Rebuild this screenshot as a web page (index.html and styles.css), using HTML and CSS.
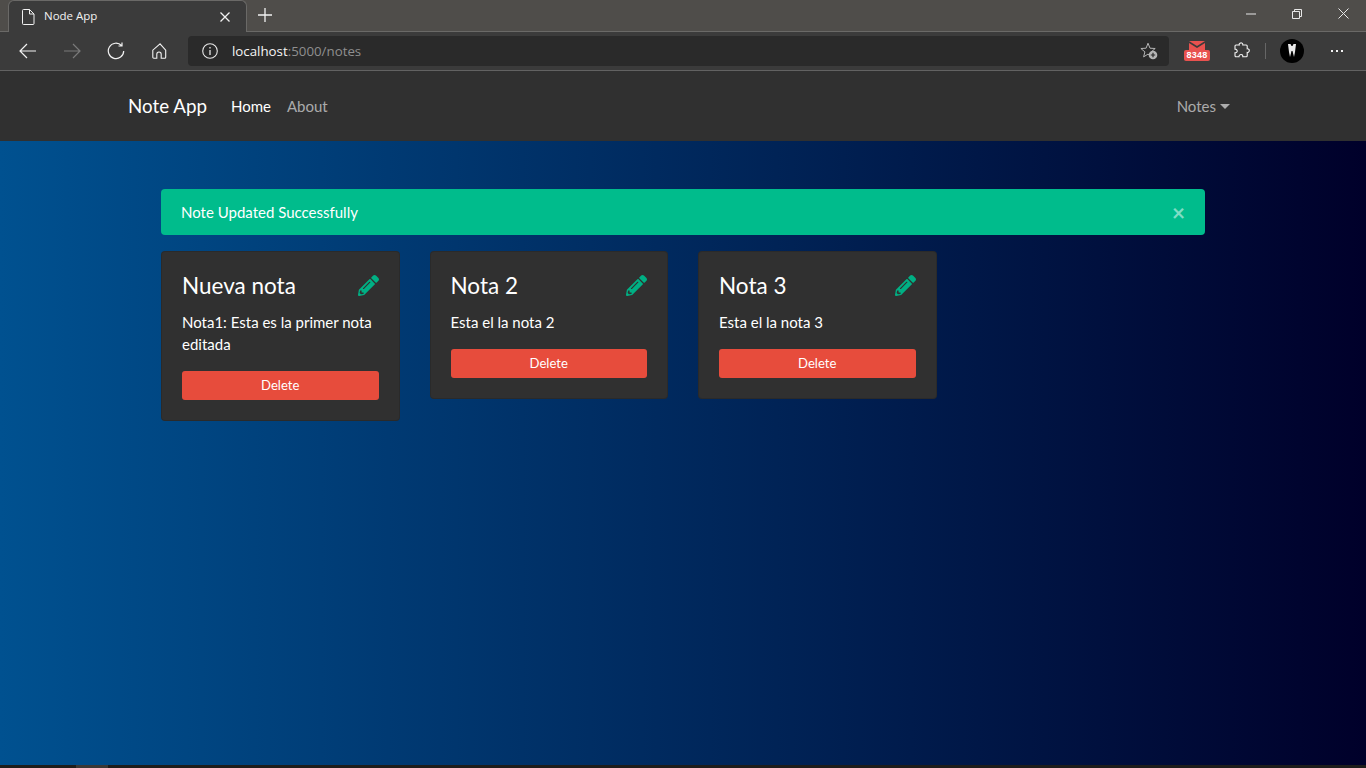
FILE: index.html
```html
<!DOCTYPE html>
<html lang="en">
<head>
  <meta charset="UTF-8">
  <title>Node App</title>
  <link rel="stylesheet" href="styles.css">
</head>
<body>
  <!-- browser frame -->
  <div class="tabstrip">
    <div class="tab">
      <svg class="tab-icon" width="14" height="16" viewBox="0 0 14 16"><path d="M1.500 1.500a1 1 0 0 1 1-1h6l4.500 4.500v9.500a1 1 0 0 1-1 1h-9.500a1 1 0 0 1-1-1zM8.500 .5v4.500h4.500" fill="none" stroke="#f2f2f2"/></svg>
      <span class="tab-title">Node App</span>
      <svg class="tab-close" width="10" height="10" viewBox="0 0 10 10"><path d="M.5 .5l9 9M9.500 .5l-9 9" stroke="#f2f2f2" stroke-width="1.300"/></svg>
    </div>
    <svg class="new-tab" width="14" height="14" viewBox="0 0 14 14"><path d="M7 0v14M0 7h14" stroke="#f2f2f2" stroke-width="1.300"/></svg>
    <div class="window-btns">
      <svg width="10" height="10" viewBox="0 0 10 10"><path d="M0 5h10" stroke="#e8e8e8"/></svg>
      <svg width="10" height="10" viewBox="0 0 10 10"><path d="M.5 2.500h7v7h-7zM2.500 2.500v-2h7v7h-2" fill="none" stroke="#e8e8e8"/></svg>
      <svg width="11" height="11" viewBox="0 0 11 11"><path d="M.5 .5l10 10M10.500 .5l-10 10" stroke="#e8e8e8"/></svg>
    </div>
  </div>

  <div class="toolbar">
    <svg class="tool back" width="18" height="16" viewBox="0 0 18 16"><path d="M17 8H1M8 1L1 8l7 7" fill="none" stroke="#f2f2f2" stroke-width="1.200"/></svg>
    <svg class="tool forward" width="18" height="16" viewBox="0 0 18 16"><path d="M1 8h16M10 1l7 7-7 7" fill="none" stroke="#7a7a7a" stroke-width="1.200"/></svg>
    <svg class="tool reload" width="18" height="18" viewBox="0 0 18 18"><path d="M14.500 3.500A7.700 7.700 0 1 0 16.700 9M15 .5v3.500h-3.500" fill="none" stroke="#f2f2f2" stroke-width="1.200"/></svg>
    <svg class="tool home" width="16" height="16" viewBox="0 0 16 16"><path d="M8 .8L.8 7.200v7a1 1 0 0 0 1 1h3v-4a2.200 2.200 0 0 1 4.400 0v4h3.500a1 1 0 0 0 1-1v-7z" fill="none" stroke="#f2f2f2" stroke-width="1.100"/></svg>
    <div class="address">
      <svg class="info" width="16" height="16" viewBox="0 0 16 16"><circle cx="8" cy="8" r="7.300" fill="none" stroke="#e8e8e8" stroke-width="1.100"/><path d="M8 7v5M8 4v1.500" stroke="#e8e8e8" stroke-width="1.300"/></svg>
      <span class="url"><b>localhost</b>:5000/notes</span>
      <svg class="fav" width="18" height="18" viewBox="0 0 18 18"><path d="M8 1.200l2 5 5.200.3-4 3.400 1.200 5-4.400-2.800-4.400 2.800 1.300-5-4-3.400 5.200-.3z" fill="none" stroke="#b5b5b5"/><circle cx="13" cy="13" r="4.300" fill="#b5b5b5"/><path d="M10.800 13h4.400M13 10.800v4.400" stroke="#2a2a2a" stroke-width="1.200"/></svg>
    </div>
    <div class="mail">
      <svg width="16" height="9" viewBox="0 0 16 9"><path d="M0 0h16L8 5z" fill="#e8524f"/><path d="M0 2l8 5 8-5v7H0z" fill="#e8524f"/></svg>
      <span class="mail-count">8348</span>
    </div>
    <svg class="puzzle" width="16" height="17" viewBox="0 0 16 17"><path d="M6 1.200c1.500-.9 3 .2 2.800 1.800h3.400a1 1 0 0 1 1 1v2.800c1.800-.2 2.500 1.500 1.800 2.800-.5.900-1.300 1-1.800.9v3.300a1 1 0 0 1-1 1H8.800c.2-2-1.300-2.700-2.700-2.100-.9.400-1.200 1.200-1.100 2.100H2a1 1 0 0 1-1-1v-3c2 .2 2.500-1.300 2-2.500C2.600 7.300 1.800 7 1 7.100V4a1 1 0 0 1 1-1h3.300C5 2.300 5.300 1.600 6 1.200z" fill="none" stroke="#f2f2f2" stroke-width="1.100"/></svg>
    <span class="divider"></span>
    <div class="avatar"><svg width="8" height="13" viewBox="0 0 8 13"><path d="M0 0h2.500l1 2h1l1-2H8L7 8l-1 5-1.500-6h-1L2 13 1 8z" fill="#e8e8e8"/></svg></div>
    <div class="more"><i></i><i></i><i></i></div>
  </div>

  <nav class="navbar">
    <a class="brand" href="#">Note App</a>
    <a class="nav-link active" href="#">Home</a>
    <a class="nav-link" href="#">About</a>
    <a class="nav-link dropdown" href="#">Notes</a>
  </nav>

  <main class="main">
    <div class="alert">
      <span>Note Updated Successfully</span>
      <span class="alert-close">&times;</span>
    </div>
    <div class="notes">
      <div class="card">
        <div class="card-head">
          <h4>Nueva nota</h4>
          <svg class="pencil" width="21" height="21" viewBox="0 0 512 512"><path d="M497.900 142.100l-46.100 46.100c-4.700 4.700-12.300 4.700-17 0l-111-111c-4.700-4.700-4.700-12.300 0-17l46.100-46.100c18.700-18.700 49.100-18.700 67.900 0l60.100 60.100c18.800 18.700 18.800 49.100 0 67.900zM284.200 99.800L21.600 362.400.4 483.900c-2.900 16.400 11.400 30.600 27.800 27.800l121.500-21.300 262.600-262.600c4.700-4.700 4.700-12.300 0-17l-111-111c-4.800-4.700-12.400-4.700-17.100 0zM124.100 339.900c-5.500-5.500-5.500-14.300 0-19.800l154-154c5.500-5.500 14.300-5.500 19.800 0s5.500 14.300 0 19.800l-154 154c-5.500 5.500-14.300 5.500-19.800 0zM88 424h48v36.300l-64.500 11.300-31.100-31.100L51.700 376H88v48z"/></svg>
        </div>
        <p>Nota1: Esta es la primer nota editada</p>
        <button type="button">Delete</button>
      </div>
      <div class="card">
        <div class="card-head">
          <h4>Nota 2</h4>
          <svg class="pencil" width="21" height="21" viewBox="0 0 512 512"><path d="M497.900 142.100l-46.100 46.100c-4.700 4.700-12.300 4.700-17 0l-111-111c-4.700-4.700-4.700-12.300 0-17l46.100-46.100c18.700-18.700 49.100-18.700 67.900 0l60.100 60.100c18.800 18.700 18.800 49.100 0 67.900zM284.200 99.800L21.600 362.400.4 483.900c-2.900 16.400 11.400 30.600 27.800 27.800l121.500-21.300 262.600-262.600c4.700-4.700 4.700-12.300 0-17l-111-111c-4.800-4.700-12.400-4.700-17.100 0zM124.100 339.900c-5.500-5.500-5.500-14.300 0-19.800l154-154c5.500-5.500 14.300-5.500 19.800 0s5.500 14.300 0 19.800l-154 154c-5.500 5.500-14.300 5.500-19.800 0zM88 424h48v36.300l-64.500 11.300-31.100-31.100L51.700 376H88v48z"/></svg>
        </div>
        <p>Esta el la nota 2</p>
        <button type="button">Delete</button>
      </div>
      <div class="card">
        <div class="card-head">
          <h4>Nota 3</h4>
          <svg class="pencil" width="21" height="21" viewBox="0 0 512 512"><path d="M497.900 142.100l-46.100 46.100c-4.700 4.700-12.300 4.700-17 0l-111-111c-4.700-4.700-4.700-12.300 0-17l46.100-46.100c18.700-18.700 49.100-18.700 67.900 0l60.100 60.100c18.800 18.700 18.800 49.100 0 67.900zM284.200 99.800L21.600 362.400.4 483.900c-2.900 16.400 11.400 30.600 27.800 27.800l121.500-21.300 262.600-262.600c4.700-4.700 4.700-12.300 0-17l-111-111c-4.800-4.700-12.400-4.700-17.100 0zM124.100 339.900c-5.500-5.500-5.500-14.300 0-19.800l154-154c5.500-5.500 14.300-5.500 19.800 0s5.500 14.300 0 19.800l-154 154c-5.500 5.500-14.300 5.500-19.800 0zM88 424h48v36.300l-64.500 11.300-31.100-31.100L51.700 376H88v48z"/></svg>
        </div>
        <p>Esta el la nota 3</p>
        <button type="button">Delete</button>
      </div>
    </div>
  </main>

  <div class="taskbar"><span></span></div>
</body>
</html>
```

FILE: styles.css
```css
* {
  box-sizing: border-box;
}
body {
  margin: 0;
  height: 768px;
  display: flex;
  flex-direction: column;
  overflow: hidden;
  font-family: Lato, "Liberation Sans", sans-serif;
  font-size: 15px;
  color: #fff;
}
a {
  text-decoration: none;
}

/* browser frame */
.tabstrip {
  height: 32px;
  flex: none;
  display: flex;
  align-items: flex-end;
  padding-left: 8px;
  background: #4f4d4a;
  border-bottom: 1px solid #6a6967;
}
.tab {
  width: 239px;
  height: 32px;
  margin-bottom: -1px;
  display: flex;
  align-items: center;
  padding: 0 16px 0 12px;
  background: #3b3b3b;
  border: 1px solid #6a6967;
  border-bottom: none;
  border-radius: 6px 6px 0 0;
}
.tab-title {
  flex: 1;
  margin-left: 9px;
  padding-bottom: 2px;
  font-family: "Open Sans", sans-serif;
  font-size: 11.500px;
  color: #f2f2f2;
}
.new-tab {
  margin: 0 0 9px 11px;
}
.window-btns {
  margin-left: auto;
  height: 31px;
  display: flex;
  align-items: center;
  gap: 36px;
  padding: 0 17px 4px 0;
}
.toolbar {
  height: 39px;
  flex: none;
  display: flex;
  align-items: center;
  background: #3b3b3b;
  border-bottom: 1px solid #626262;
  padding-bottom: 1px;
}
.tool {
  flex: none;
}
.back {
  margin-left: 19px;
}
.forward {
  margin-left: 26px;
}
.reload {
  margin-left: 26px;
}
.home {
  margin-left: 27px;
}
.address {
  width: 981px;
  height: 30px;
  margin-left: 20px;
  display: flex;
  align-items: center;
  padding: 0 11px 0 14px;
  background: #2a2a2a;
  border-radius: 4px;
}
.url {
  flex: 1;
  margin-left: 14px;
  font-family: "Open Sans", sans-serif;
  font-size: 13.300px;
  color: #8f8f8f;
}
.url b {
  font-weight: 400;
  color: #f5f5f5;
}
.mail {
  width: 26px;
  margin-left: 15px;
  display: flex;
  flex-direction: column;
  align-items: center;
}
.mail-count {
  width: 26px;
  height: 11px;
  background: #e8524f;
  border-radius: 2px;
  font-family: "Liberation Sans", sans-serif;
  font-size: 9px;
  font-weight: 700;
  line-height: 11px;
  text-align: center;
  letter-spacing: .3px;
}
.puzzle {
  margin-left: 24px;
  flex: none;
}
.divider {
  width: 1px;
  height: 16px;
  margin-left: 15px;
  background: #666;
}
.avatar {
  width: 24px;
  height: 24px;
  margin-left: 14px;
  display: flex;
  align-items: center;
  justify-content: center;
  background: #000;
  border-radius: 50%;
}
.more {
  margin-left: 27px;
  display: flex;
  gap: 3px;
}
.more i {
  width: 2px;
  height: 2px;
  background: #f2f2f2;
}

/* app navbar */
.navbar {
  height: 70px;
  flex: none;
  display: flex;
  align-items: center;
  padding: 0 128px;
  background: #303030;
}
.brand {
  margin: 0 16px 2px 0;
  font-size: 18.750px;
  color: #fff;
}
.nav-link {
  padding: 0 8px;
  color: rgba(255, 255, 255, .6);
}
.nav-link.active {
  color: #fff;
}
.dropdown {
  margin-left: auto;
}
.dropdown::after {
  content: "";
  display: inline-block;
  margin-left: 4px;
  vertical-align: 3px;
  border-top: 5px solid;
  border-left: 5px solid transparent;
  border-right: 5px solid transparent;
}

/* page */
.main {
  flex: 1;
  padding: 48px 161px 0;
  background: linear-gradient(to right, #005190, #00002a);
}
.alert {
  height: 46px;
  margin-bottom: 16px;
  display: flex;
  align-items: center;
  justify-content: space-between;
  padding: 0 20px;
  background: #00bc8c;
  border-radius: 4px;
}
.alert-close {
  font-size: 22.500px;
  font-weight: 700;
  color: rgba(255, 255, 255, .5);
}
.notes {
  display: grid;
  grid-template-columns: repeat(4, 1fr);
  gap: 30px;
  align-items: start;
}
.card {
  padding: 20px;
  background: #303030;
  border: 1px solid rgba(0, 0, 0, .125);
  border-radius: 4px;
}
.card-head {
  display: flex;
  align-items: center;
  justify-content: space-between;
  margin-bottom: 12px;
}
.card-head h4 {
  margin: 0;
  font-size: 22.500px;
  font-weight: 400;
  line-height: 27px;
}
.pencil {
  fill: #00b084;
}
.card p {
  margin: 0 0 16px;
  line-height: 22px;
}
.card button {
  display: block;
  width: 100%;
  height: 29px;
  padding: 0 0 2px;
  background: #e74c3c;
  color: #fff;
  border: none;
  border-radius: 3px;
  font-family: inherit;
  font-size: 13.100px;
}
.taskbar {
  height: 3px;
  flex: none;
  background: #1e1d1b;
}
.taskbar span {
  display: block;
  width: 32px;
  height: 3px;
  margin-left: 76px;
  background: #3a3836;
}
```
